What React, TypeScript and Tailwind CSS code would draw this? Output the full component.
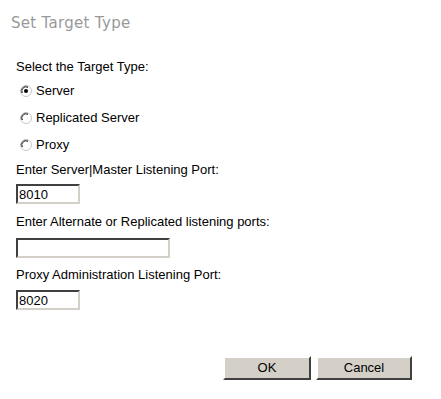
import React from "react";

function Radio({ checked }: { checked?: boolean }) {
  return (
    <svg width="12" height="12" viewBox="0 0 12 12" className="shrink-0">
      <circle cx="6" cy="6" r="5.5" fill="#fff" stroke="#c8c8c8" />
      <path d="M1.5 8 A5 5 0 0 1 8 1.5" fill="none" stroke="#808080" strokeWidth="1" />
      <path d="M2.5 8 A4 4 0 0 1 8 2.5" fill="none" stroke="#404040" strokeWidth="1" />
      {checked && <circle cx="6" cy="6" r="2" fill="#000" />}
    </svg>
  );
}

function Input({ value, w }: { value?: string; w: string }) {
  return (
    <div
      className={`${w} h-[20px] bg-white border-2 border-t-[#404040] border-l-[#404040] border-b-[#d4d0c8] border-r-[#d4d0c8] flex items-center pl-[1px] text-[13px] leading-none text-black`}
    >
      {value}
    </div>
  );
}

export default function App() {
  return (
    <div
      className="w-[441px] h-[399px] bg-white relative"
      style={{ fontFamily: '"Liberation Sans", Arial, sans-serif' }}
    >
      <div
        className="absolute left-[11px] top-[13px] text-[15px] leading-[20px] text-[#999999] tracking-[0.3px]"
        style={{ fontFamily: '"DejaVu Sans", Verdana, sans-serif' }}
      >
        Set Target Type
      </div>
      <div className="pt-[59px] pl-[16px] flex flex-col text-[13px] leading-[15px] text-black">
        <div>Select the Target Type:</div>
        <div className="flex items-center gap-[4px] mt-[9px] pl-[4px]">
          <Radio checked />
          <span>Server</span>
        </div>
        <div className="flex items-center gap-[4px] mt-[12px] pl-[4px]">
          <Radio />
          <span>Replicated Server</span>
        </div>
        <div className="flex items-center gap-[4px] mt-[12px] pl-[4px]">
          <Radio />
          <span>Proxy</span>
        </div>
        <div className="mt-[10px]">Enter Server|Master Listening Port:</div>
        <div className="mt-[7px]">
          <Input value="8010" w="w-[64px]" />
        </div>
        <div className="mt-[10px]">Enter Alternate or Replicated listening ports:</div>
        <div className="mt-[9px]">
          <Input w="w-[154px]" />
        </div>
        <div className="mt-[9px]">Proxy Administration Listening Port:</div>
        <div className="mt-[8px]">
          <Input value="8020" w="w-[64px]" />
        </div>
      </div>
      <div className="absolute left-[223px] top-[356px] flex gap-[5px]">
        <button className="w-[88px] h-[24px] bg-[#d4d0c8] border-2 border-t-[#ffffff] border-l-[#ffffff] border-b-[#404040] border-r-[#404040] text-[13px] text-black">
          OK
        </button>
        <button className="w-[96px] h-[24px] bg-[#d4d0c8] border-2 border-t-[#ffffff] border-l-[#ffffff] border-b-[#404040] border-r-[#404040] text-[13px] text-black">
          Cancel
        </button>
      </div>
    </div>
  );
}
